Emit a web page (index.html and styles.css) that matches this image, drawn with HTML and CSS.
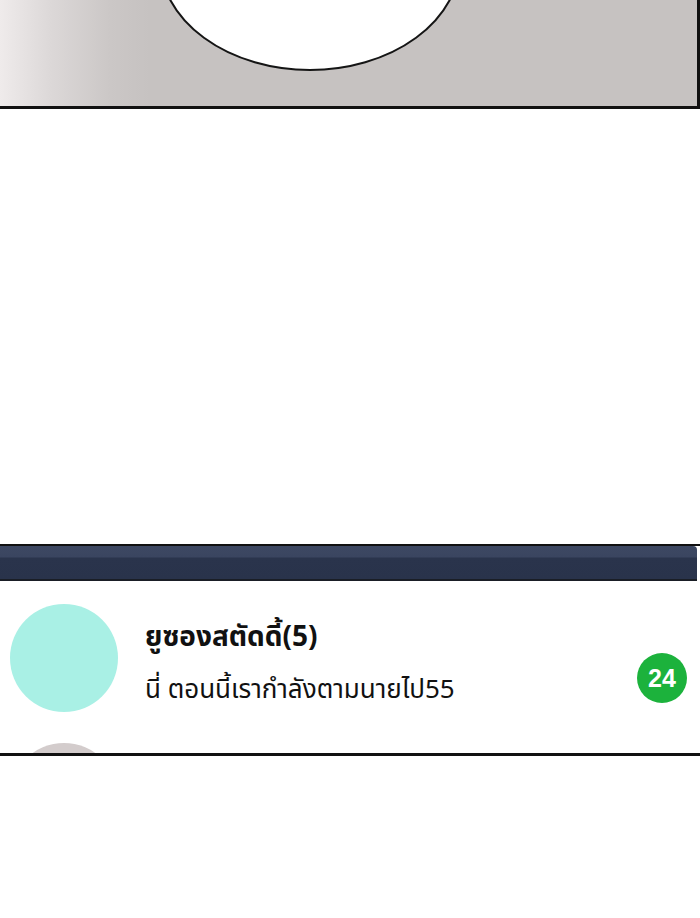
FILE: index.html
```html
<!DOCTYPE html>
<html lang="th">
  <head>
    <title>แชท</title>
    <link rel="stylesheet" href="styles.css">
  </head>

  <body>
    <!-- ช่องบนสุด: พื้นเทา + วงรีสีขาว -->
    <section class="panel">
      <svg class="panel-art" width="697" height="106" viewBox="0 0 697 106">
        <ellipse cx="310" cy="-40" rx="150" ry="110" fill="#fff" stroke="#151515" stroke-width="2" />
      </svg>
    </section>

    <!-- หน้าจอโทรศัพท์: รายการแชท -->
    <section class="phone">
      <div class="phone-bar"></div>
      <ul class="chats">
        <li class="chat">
          <span class="avatar"></span>
          <div class="chat-text">
            <p class="chat-name">ยูซองสตัดดี้(5)</p>
            <p class="chat-msg">นี่ ตอนนี้เรากำลังตามนายไป55</p>
          </div>
          <span class="badge">24</span>
        </li>
        <li class="chat">
          <span class="avatar avatar-gray"></span>
        </li>
      </ul>
    </section>
  </body>
</html>
```

FILE: styles.css
```css
body {
  margin: 0;
  inline-size: 700px;
  background-color: #fff;
  font-family: "Noto Sans Thai", "Noto Sans", "DejaVu Sans", sans-serif;
}

.panel {
  block-size: 106px;
  inline-size: 697px;
  border-block-end: 3px solid #111;
  border-inline-end: 3px solid #111;
  background: linear-gradient(to right, #efebeb 0, #dcd8d8 50px, #cbc7c6 110px, #c6c2c1 150px, #c6c2c1);
  overflow: hidden;

  svg {
    display: block;
  }
}

.phone {
  margin-block-start: 435px;
  border-block-start: 2px solid #111;
  border-block-end: 3px solid #111;
}

.phone-bar {
  block-size: 33px;
  inline-size: 697px;
  border-block-end: 2px solid #1a1e26;
  border-start-end-radius: 4px;
  background: linear-gradient(#3d4862 0, #3a4560 11px, #2a344c 12px, #29334b);
}

.chats {
  list-style-type: "";
  margin: 0;
  padding: 0;
  block-size: 172px;
  overflow: hidden;
}

.chat {
  display: flex;
  align-items: flex-start;
  block-size: 139px;
  padding-block-start: 23px;
  padding-inline: 10px 13px;
  box-sizing: border-box;
}

.avatar {
  flex: none;
  inline-size: 108px;
  block-size: 108px;
  border-radius: 50%;
  background-color: #a9f0e5;
}

.avatar-gray {
  background-color: #d3cccc;
}

.chat-text {
  flex: 1;
  margin-inline-start: 27px;
  padding-block-start: 14px;

  p {
    margin: 0;
    color: #111;
    white-space: nowrap;
  }
}

.chat-name {
  font-size: 28px;
  font-weight: 700;
  line-height: 40px;
}

.chat-msg {
  padding-block-start: 12px;
  font-size: 26px;
  line-height: 40px;
}

.badge {
  flex: none;
  display: grid;
  place-items: center;
  inline-size: 50px;
  block-size: 50px;
  margin-block-start: 49px;
  border-radius: 50%;
  background-color: #1cb23c;
  color: #fff;
  font-family: "Liberation Sans", Arial, sans-serif;
  font-weight: 700;
  font-size: 25px;
}
```
